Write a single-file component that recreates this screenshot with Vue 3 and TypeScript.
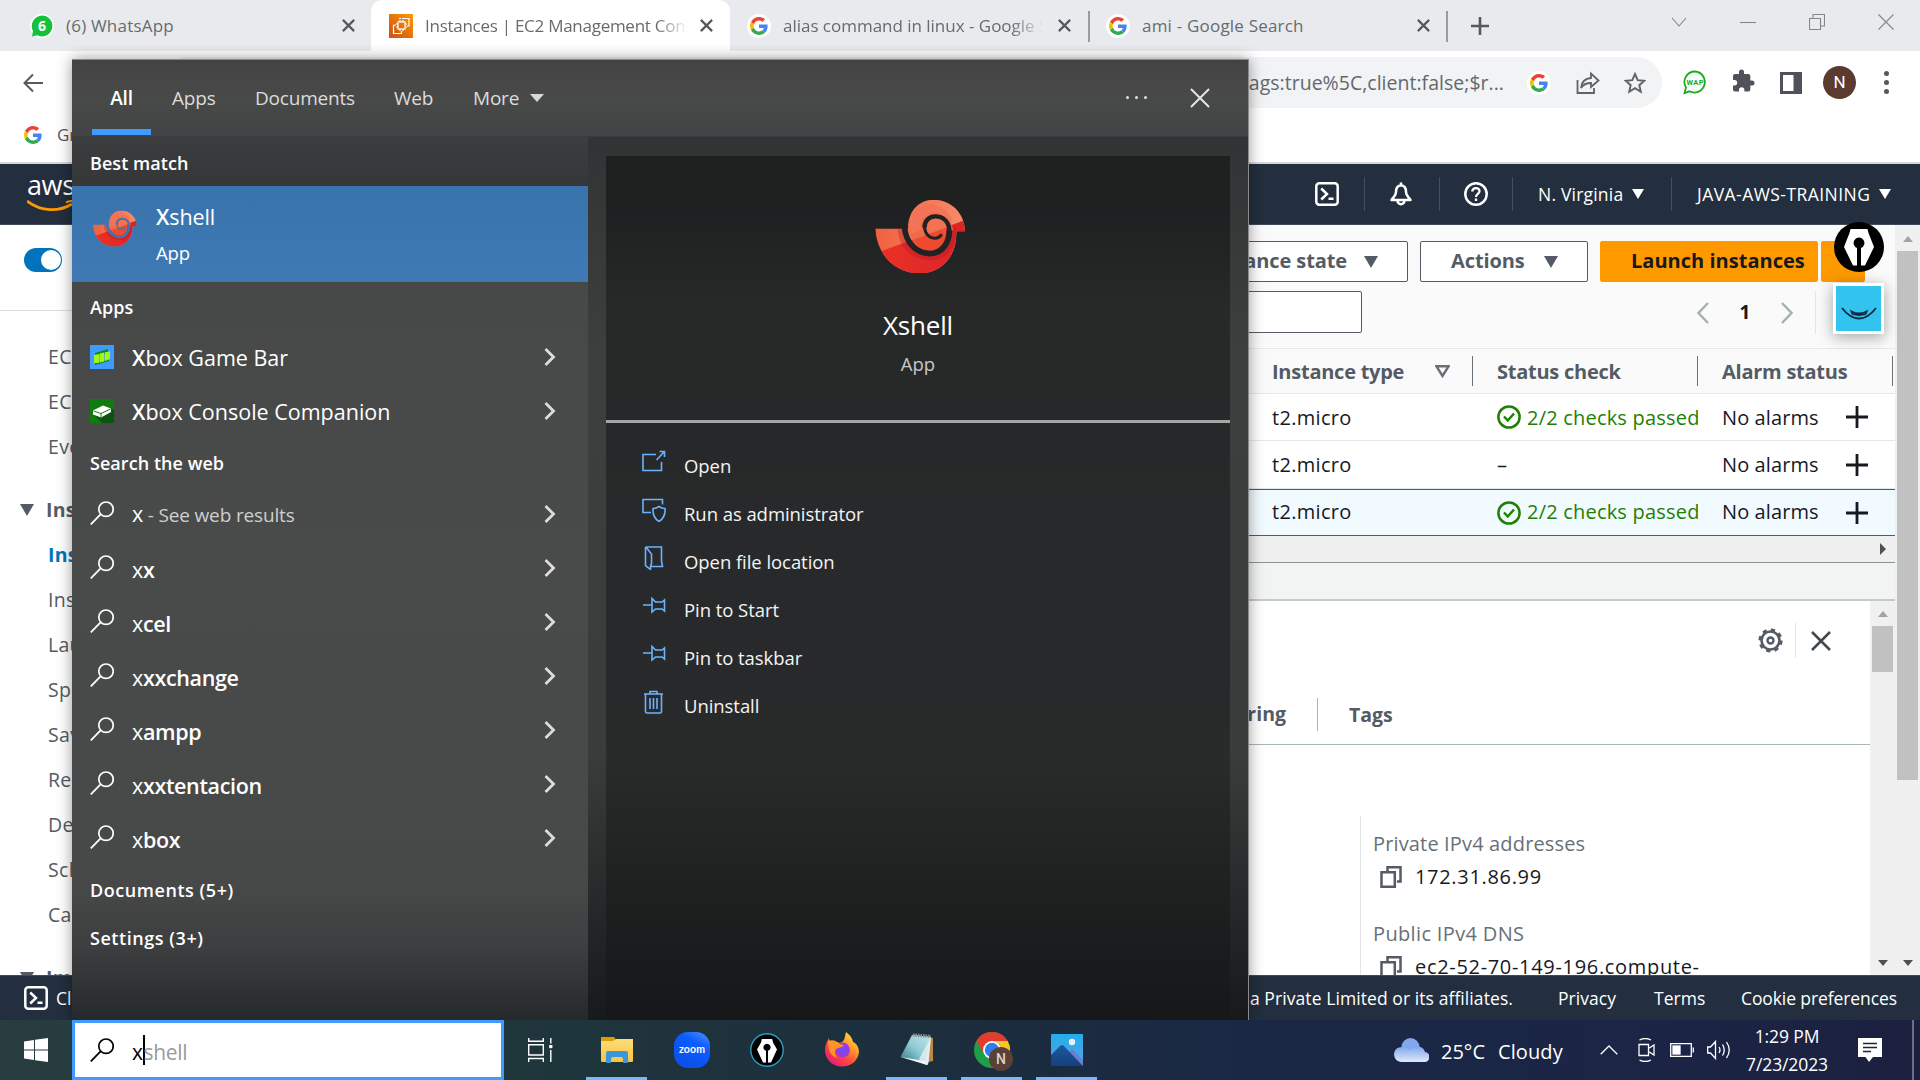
<script setup lang="ts">
interface NavItem { label: string; kind?: 'group' | 'active' }
interface Row { check: boolean; selected?: boolean }
interface WebHit { head: string; tail?: string; note?: string }

const navItems: NavItem[] = [
  { label: 'EC2' },
  { label: 'EC2' },
  { label: 'Eve' },
  { label: 'Insta', kind: 'group' },
  { label: 'Insta', kind: 'active' },
  { label: 'Insta' },
  { label: 'Lau' },
  { label: 'Spo' },
  { label: 'Sav' },
  { label: 'Res' },
  { label: 'Ded' },
  { label: 'Sch' },
  { label: 'Cap' },
  { label: 'Ima', kind: 'group' },
]
const rows: Row[] = [{ check: true }, { check: false }, { check: true, selected: true }]
const apps = [
  { icon: 'gamebar', rest: 'box Game Bar' },
  { icon: 'console', rest: 'box Console Companion' },
]
const webHits: WebHit[] = [
  { head: 'x', note: ' - See web results' },
  { head: 'x', tail: 'x' },
  { head: 'x', tail: 'cel' },
  { head: 'x', tail: 'xxchange' },
  { head: 'x', tail: 'ampp' },
  { head: 'x', tail: 'xxtentacion' },
  { head: 'x', tail: 'box' },
]
const actions = [
  { icon: 'open', label: 'Open' },
  { icon: 'admin', label: 'Run as administrator' },
  { icon: 'folder', label: 'Open file location' },
  { icon: 'pin', label: 'Pin to Start' },
  { icon: 'pin', label: 'Pin to taskbar' },
  { icon: 'trash', label: 'Uninstall' },
]
const taskApps = [
  { icon: 'explorer', open: true },
  { icon: 'zoom', open: false },
  { icon: 'pen-ring', open: false },
  { icon: 'firefox', open: false },
  { icon: 'notepad', open: true },
  { icon: 'chrome', open: true },
  { icon: 'photos', open: true },
]
</script>

<template>
  <div class="screen">
    <svg class="defs" width="0" height="0" aria-hidden="true">
      <defs>
        <linearGradient id="gUp" x1="0" x2="1"><stop offset="0" stop-color="#f0603f" /><stop offset="1" stop-color="#f78d6b" /></linearGradient>
        <linearGradient id="gLow" x1="0" x2="1"><stop offset="0" stop-color="#ee3127" /><stop offset="1" stop-color="#d92427" /></linearGradient>
        <linearGradient id="gEc2" x1="0" y1="1" x2="1" y2="0"><stop offset="0" stop-color="#c8511b" /><stop offset="1" stop-color="#ff9900" /></linearGradient>
        <linearGradient id="gZoom" x1="1" y1="0" x2="0.4" y2="1"><stop offset="0" stop-color="#4f92ff" /><stop offset="0.4" stop-color="#0b5cff" /><stop offset="1" stop-color="#0b50e8" /></linearGradient>
        <linearGradient id="gFox" x1="1" y1="0" x2="0.2" y2="1"><stop offset="0" stop-color="#fff44f" /><stop offset="0.35" stop-color="#ffa52a" /><stop offset="0.65" stop-color="#ff4a3d" /><stop offset="1" stop-color="#e5157c" /></linearGradient>
        <radialGradient id="gOrb"><stop offset="0" stop-color="#6a4ff5" /><stop offset="1" stop-color="#a435d8" /></radialGradient>
        <linearGradient id="gPhoto" x1="0" y1="0" x2="0" y2="1"><stop offset="0" stop-color="#24aeea" /><stop offset="1" stop-color="#5a9ee8" /></linearGradient>
        <linearGradient id="gHill" x1="0" y1="0" x2="0" y2="1"><stop offset="0" stop-color="#1b5a9c" /><stop offset="1" stop-color="#153f80" /></linearGradient>
        <linearGradient id="gCloud" x1="0" y1="0" x2="0" y2="1"><stop offset="0" stop-color="#7fa6ee" /><stop offset="1" stop-color="#dfe9fb" /></linearGradient>
        <linearGradient id="gNote" x1="0" y1="1" x2="1" y2="0"><stop offset="0" stop-color="#2d7484" /><stop offset="0.5" stop-color="#8fcbd6" /><stop offset="1" stop-color="#c4e4ea" /></linearGradient>
        <linearGradient id="gFolder" x1="0" y1="0" x2="0" y2="1"><stop offset="0" stop-color="#ffdd7c" /><stop offset="1" stop-color="#f8c33e" /></linearGradient>
        <clipPath id="shellClip"><path d="M45 145H143C141 95 175 58 218 58C270 58 311 95 313 152H287C290 225 245 278 178 278C100 278 50 220 45 145Z" /></clipPath>
      </defs>
      <symbol id="google" viewBox="0 0 48 48">
        <path fill="#EA4335" d="M24 9.5c3.54 0 6.71 1.22 9.21 3.6l6.85-6.85C35.9 2.38 30.47 0 24 0 14.62 0 6.51 5.38 2.56 13.22l7.98 6.19C12.43 13.72 17.74 9.5 24 9.5z" />
        <path fill="#4285F4" d="M46.98 24.55c0-1.57-.15-3.09-.38-4.55H24v9.02h12.94c-.58 2.96-2.26 5.48-4.78 7.18l7.73 6c4.51-4.18 7.09-10.36 7.09-17.65z" />
        <path fill="#FBBC05" d="M10.53 28.59c-.48-1.45-.76-2.99-.76-4.59s.27-3.14.76-4.59l-7.98-6.19C.92 16.46 0 20.12 0 24c0 3.88.92 7.54 2.56 10.78l7.97-6.19z" />
        <path fill="#34A853" d="M24 48c6.48 0 11.93-2.13 15.89-5.81l-7.73-6c-2.15 1.45-4.92 2.3-8.16 2.3-6.26 0-11.57-4.22-13.47-9.91l-7.98 6.19C6.51 42.62 14.62 48 24 48z" />
      </symbol>
      <symbol id="x" viewBox="0 0 12 12"><path d="M.8 .8L11.2 11.2M11.2 .8L.8 11.2" fill="none" stroke="currentColor" /></symbol>
      <symbol id="xshell" viewBox="45 56 270 224">
        <g clip-path="url(#shellClip)">
          <rect x="40" y="50" width="280" height="235" fill="url(#gUp)" />
          <path d="M40 220L150 180L320 116V290H40Z" fill="url(#gLow)" />
          <path d="M118 140C120 205 165 232 212 232C262 230 282 190 280 140" fill="none" stroke="#b01825" stroke-opacity=".35" stroke-width="14" />
          <path d="M150 150C150 190 180 212 212 210C240 208 256 180 256 150C254 120 236 98 222 98C200 100 180 120 182 145C184 165 200 182 222 180C240 178 250 160 246 140L280 150L256 90L215 70L160 90Z" fill="#f06844" fill-opacity=".75" />
          <path d="M150 96C172 62 252 58 275 118L252 140C250 108 236 96 222 97C192 98 176 120 181 148L152 160Z" fill="#f4765a" fill-opacity=".8" />
          <path d="M162 178L246 147C258 165 246 206 212 211C190 211 170 200 162 178Z" fill="#ee4a30" />
          <path d="M200 135C202 118 215 112 226 112C246 112 254 128 256 140L205 159Z" fill="#f27252" />
        </g>
        <path d="M132 138C136 192 172 219 209 219C246 219 267 184 266 150" fill="none" stroke="currentColor" stroke-width="17" />
        <path d="M266 151C266 122 246 108 225 108C203 108 192 124 192 141" fill="none" stroke="currentColor" stroke-width="13" />
        <path d="M192 139C193 160 206 173 221 173C233 173 240 168 243 161" fill="none" stroke="currentColor" stroke-width="9" />
      </symbol>
      <symbol id="loupe" viewBox="0 0 24 24"><circle cx="16" cy="8.2" r="7.2" fill="none" stroke="currentColor" stroke-width="1.7" /><path d="M10.8 13.2L.8 23.4" stroke="currentColor" stroke-width="1.8" /></symbol>
      <symbol id="shellbox" viewBox="0 0 24 24"><rect x="1.3" y="1.3" width="21.4" height="21.4" rx="3" fill="none" stroke="currentColor" stroke-width="2.5" /><path d="M6.2 6.5L12 12L6.2 17.5M13.5 16.8H18.5" fill="none" stroke="currentColor" stroke-width="2.5" /></symbol>
      <symbol id="nib" viewBox="0 0 50 50"><circle cx="25" cy="25" r="25" fill="#000" /><path d="M16.5 7H33.5L34.5 11L40 25L31 43.5H27V26A5.4 5.4 0 1 0 23 26V43.5H19L10 25L15.500 11Z" fill="#fff" /><path d="M25 26V44" stroke="#000" stroke-width="2.4" /></symbol>
      <symbol id="gamebar" viewBox="0 0 24 24"><rect width="24" height="24" fill="#3f9bff" /><path d="M5 8L18 4V8L5 12ZM5 17L19 14V16L5 20Z" fill="#0f8a1c" /><path d="M4 10L9 9V18L4 18ZM9.500 8.500L14 7.500V16.500L9.500 17.500ZM14.700 7.300L20 6.500V14L14.700 16.200Z" fill="#a4f51c" /></symbol>
      <symbol id="console" viewBox="0 0 24 24"><rect width="24" height="24" fill="#107c10" /><path d="M3 15L12 24H24V11L20 9Z" fill="#0a540d" /><path d="M3 11.500L13 6.500L21 9.500V13L11 18.500L3 15.500Z" fill="#fff" /><path d="M3.500 12L11 14.500L20.500 10M11 14.500V18" fill="none" stroke="#107c10" /></symbol>
      <symbol id="open" viewBox="0 0 24 24"><path d="M14 4.500H1V20.500H19.500V12M14.500 10L22 2M17.500 1.500H22.500V7" fill="none" stroke="currentColor" stroke-width="1.600" /></symbol>
      <symbol id="admin" viewBox="0 0 24 24"><path d="M9 14.500H1V1.500H20.500V6.500M17 8.500C15 10 13 10.500 11 10.500C10.500 17 12 20.500 17 23.500C22 20.500 23.500 17 23 10.500C21 10.500 19 10 17 8.500Z" fill="none" stroke="currentColor" stroke-width="1.600" /></symbol>
      <symbol id="folder" viewBox="0 0 24 24"><path d="M3.500 1H19.500V15L20.500 20.500H9M3.500 1V19.500L8.500 23.500V20.500L9.500 17.500V8L4 1.200" fill="none" stroke="currentColor" stroke-width="1.600" /></symbol>
      <symbol id="pin" viewBox="0 0 24 24"><path d="M1 11H10M10 4.500V18L13.500 15H20L22.500 17V6L20 8H13.500Z" fill="none" stroke="currentColor" stroke-width="1.600" /></symbol>
      <symbol id="trash" viewBox="0 0 24 24"><path d="M2 4H21M8 4V1.500H15V4M3.500 4V21.500Q3.500 23 5 23H18Q19.500 23 19.500 21.500V4M8 8V19M11.500 8V19M15 8V19" fill="none" stroke="currentColor" stroke-width="1.600" /></symbol>
      <symbol id="copy" viewBox="0 0 22 22"><path d="M7.500 5V1.300H20.500V15.500H17M1.500 6.300H14.800V20.700H1.500Z" fill="none" stroke="currentColor" stroke-width="2.500" /></symbol>
      <symbol id="check" viewBox="0 0 24 24"><circle cx="12" cy="12" r="10.600" fill="none" stroke="currentColor" stroke-width="2.500" /><path d="M7 11.500L10.800 15.500L17 8.500" fill="none" stroke="currentColor" stroke-width="2.500" /></symbol>
      <symbol id="explorer" viewBox="0 0 44 44"><path d="M6 9H19L20.500 11V14H6Z" fill="#dd9b07" /><path d="M6 13H18L21 11H38V33Q38 34 37 34H7Q6 34 6 33Z" fill="url(#gFolder)" /><path d="M11 34V25Q11 23 13 23H31Q33 23 33 25V34Q33 35 32 35H28.500Q28 35 28 34V31Q28 29 26 29H18Q16 29 16 31V34Q16 35 15 35H12Q11 35 11 34Z" fill="#3b96dd" /></symbol>
      <symbol id="zoom" viewBox="0 0 44 44"><rect x="4" y="4" width="36" height="36" rx="14" fill="url(#gZoom)" /></symbol>
      <symbol id="pen-ring" viewBox="0 0 44 44"><circle cx="22" cy="22" r="16.200" fill="#000" stroke="#2a9fc4" stroke-width="1.400" /><path d="M16.800 11H27.200L28 14.500L32 21.500L26 34.500H23V22.800A3.600 3.600 0 1 0 21 22.800V34.500H18L12 21.500L16 14.500Z" fill="#fff" /><path d="M22 22V35" stroke="#000" stroke-width="1.200" /></symbol>
      <symbol id="firefox" viewBox="0 0 44 44"><path d="M26 4C31 8 32 10 33 14C36 15 39 19 39 24C38 33 31 38.500 22 38.500C12 38.500 5 31 5 22C5 17 7 13 9 10C9 12 10 14 11 14L17 14C19 15 22 15 23 13C25 11 25 7 26 4Z" fill="url(#gFox)" /><circle cx="22.500" cy="22" r="7.400" fill="url(#gOrb)" /><path d="M8 13C14 11 17 14 20 16L24 17.500C21 20 19 19 16 21C14 24 15 28 18 30C12 29 8 24 8 13Z" fill="#ff9328" /></symbol>
      <symbol id="notepad" viewBox="0 0 44 44"><path d="M32 8L38 10V33L33 34Z" fill="#b98a45" /><path d="M18 7L36 9L33 37L27 35Z" fill="#d9dee0" /><path d="M17 7L36 9L30 35L5.500 29Z" fill="url(#gNote)" /><path d="M36 9L24 31L31 37L33.500 35Z" fill="#eef1f2" fill-opacity=".75" /><path d="M5.500 29L32 37L30 33Z" fill="#f3f6f7" /><path d="M18 7L36 8.500" stroke="#8b9296" stroke-width="3.500" stroke-dasharray="1.500 1" /></symbol>
      <symbol id="chrome" viewBox="0 0 44 44"><circle cx="22" cy="22" r="18" fill="#1e9e49" /><path d="M6.400 13A18 18 0 0 1 37.600 13H22A9 9 0 0 0 14.200 26.500Z" fill="#e33b2e" /><path d="M37.600 13A18 18 0 0 1 22 40L29.800 26.500A9 9 0 0 0 22 13Z" fill="#fcc31e" /><circle cx="22" cy="22" r="9" fill="#fff" /><circle cx="22" cy="22" r="7.200" fill="#2f7de9" /><circle cx="31" cy="31" r="12" fill="#5b4037" /></symbol>
      <symbol id="photos" viewBox="0 0 44 44"><rect x="6" y="6" width="32" height="32" rx="1" fill="url(#gPhoto)" /><path d="M22 26L27 21L38 32V38H22Z" fill="#6b7fd0" /><path d="M6 27L15.500 17.500Q17 16.500 18.500 17.500L38 38H6Z" fill="url(#gHill)" /><circle cx="27" cy="14" r="3.200" fill="#e8f4fd" /></symbol>
    </svg>

    <!-- browser tab strip -->
    <div class="tabstrip">
      <div class="tab t1">
        <svg class="fav" width="24" height="24" viewBox="0 0 24 24"><circle cx="12" cy="12" r="12" fill="#fff" /><path d="M12 1.500A10.500 10.500 0 1 1 7 21.300L2 22.500L3 17A10.500 10.500 0 0 1 12 1.500Z" fill="#13c13c" /><text x="12" y="17" text-anchor="middle" fill="#fff" font-family="Open Sans, sans-serif" font-weight="700" font-size="14">6</text></svg>
        <span class="title">(6) WhatsApp</span>
        <svg class="tx" width="13" height="13"><use href="#x" /></svg>
      </div>
      <div class="tab t2 on">
        <svg class="fav" width="24" height="24" viewBox="0 0 24 24"><rect width="24" height="24" fill="url(#gEc2)" /><g fill="none" stroke="#fff" stroke-width="1.200"><rect x="9" y="8" width="7" height="7" /><path d="M13 4.500H20V12H18M10 4.500H12M4.500 11H7M4.500 11V19.500H12.500V17M11 6V8M14 6V8M11 15V17M14 15V17M7 10H9M7 13H9M16 10H18M16 13H18" /></g></svg>
        <span class="title fade">Instances | EC2 Management Console</span>
        <svg class="tx" width="13" height="13"><use href="#x" /></svg>
      </div>
      <div class="tab t3">
        <span class="gdisc"><svg width="18" height="18"><use href="#google" /></svg></span>
        <span class="title fade">alias command in linux - Google Search</span>
        <svg class="tx" width="13" height="13"><use href="#x" /></svg>
      </div>
      <div class="tab t4">
        <span class="gdisc"><svg width="18" height="18"><use href="#google" /></svg></span>
        <span class="title">ami - Google Search</span>
        <svg class="tx" width="13" height="13"><use href="#x" /></svg>
      </div>
      <svg class="plus" width="18" height="18" viewBox="0 0 18 18"><path d="M9 0V18M0 9H18" stroke="#55595e" stroke-width="2.600" /></svg>
      <div class="winbtns">
        <svg width="16" height="16" viewBox="0 0 16 16"><path d="M1 4L8 12L15 4" /></svg>
        <svg width="16" height="16" viewBox="0 0 16 16"><path d="M0 8.500H16" /></svg>
        <svg width="16" height="16" viewBox="0 0 16 16"><path d="M.5 4.500H11.500V15.500H.5ZM4 4.500V.5H15.500V12H11.500" /></svg>
        <svg width="16" height="16" viewBox="0 0 16 16"><path d="M.5 .5L15.500 15.500M15.500 .5L.5 15.500" /></svg>
      </div>
    </div>

    <!-- address bar -->
    <div class="toolbar">
      <svg class="back" width="20" height="20" viewBox="0 0 20 20"><path d="M20 10H2M10 1.500L1.500 10L10 18.500" fill="none" stroke="#55595e" stroke-width="2" /></svg>
      <div class="omni">
        <span class="url">tags:true%5C,client:false;$r...</span>
        <span class="gdisc"><svg width="18" height="18"><use href="#google" /></svg></span>
        <svg class="o2" width="24" height="24" viewBox="0 0 24 24"><path d="M1.500 9V22H18V17M5 17C5.500 10.500 9 7.500 15 7V2.500L22.500 9.500L15 16V12C10.500 12 7.500 13 5 17Z" fill="none" stroke="#5f6368" stroke-width="1.800" /></svg>
        <svg class="o3" width="22" height="22" viewBox="0 0 22 22"><path d="M11 2L13.700 8.200L20.300 8.800L15.300 13.200L16.800 19.700L11 16.200L5.200 19.700L6.700 13.200L1.700 8.800L8.300 8.200Z" fill="none" stroke="#5f6368" stroke-width="1.900" /></svg>
      </div>
      <svg class="wap" width="24" height="25" viewBox="0 0 24 25"><path d="M12 1.500A10.500 10.500 0 1 1 6.500 21.300L1.500 23L3 17.500A10.500 10.500 0 0 1 12 1.500Z" fill="none" stroke="#1aab1a" stroke-width="1.800" /><text x="12" y="14.800" text-anchor="middle" fill="#1aab1a" font-family="Roboto, sans-serif" font-weight="700" font-size="7.500" textLength="17">WAP</text></svg>
      <svg class="puz" width="24" height="24" viewBox="0 0 24 24"><path d="M21 11.500H19.300V7A2 2 0 0 0 17.300 5H13V3A2.500 2.500 0 0 0 8 3V5H4A2 2 0 0 0 2 7V11H3.500A2.700 2.700 0 0 1 3.500 16.400H2V20.500A2 2 0 0 0 4 22.500H8V21A2.700 2.700 0 0 1 13.400 21V22.500H17.300A2 2 0 0 0 19.300 20.500V16.500H21A2.500 2.500 0 0 0 21 11.500Z" fill="#4f5359" /></svg>
      <svg class="side" width="22" height="22" viewBox="0 0 22 22"><path d="M0 0H22V22H0ZM3 3V19H13.500V3Z" fill="#4f5359" fill-rule="evenodd" /></svg>
      <span class="avatar">N</span>
      <span class="dots"><i /><i /><i /></span>
    </div>
    <div class="bookmarks">
      <svg width="18" height="18"><use href="#google" /></svg>
      <span>Gm</span>
    </div>

    <!-- AWS navigation -->
    <header class="aws">
      <div class="logo"><span>aws</span><svg width="56" height="14" viewBox="0 0 56 14"><path d="M0 1C14 12 32 12 45 4" fill="none" stroke="#f90" stroke-width="2.800" /><path d="M39 2.500Q45 0 48 2" fill="none" stroke="#f90" stroke-width="2" /></svg></div>
      <div class="cell c1"><svg width="24" height="24"><use href="#shellbox" /></svg></div>
      <div class="cell c2"><svg width="24" height="24" viewBox="0 0 24 24"><path d="M12 .5V4M12 3.500C7.500 3.500 7 8 7 10C7 14 4.500 15 2.500 18H21.500C19.500 15 17 14 17 10C17 8 16.500 3.500 12 3.500ZM8.500 18.500A3.500 3.700 0 0 0 15.500 18.500" fill="none" stroke="#fff" stroke-width="2.500" stroke-linejoin="round" /></svg></div>
      <div class="cell c3"><svg width="24" height="24" viewBox="0 0 24 24"><circle cx="12" cy="12" r="10.700" fill="none" stroke="#fff" stroke-width="2.500" /><path d="M8.300 9.500C8.500 4.800 15.700 5 15.500 9.300C15.400 12 12 12 12 15M12 16.500V19" fill="none" stroke="#fff" stroke-width="2.300" /></svg></div>
      <div class="cell c4"><span>N. Virginia</span><i class="tri w" /></div>
      <div class="cell c5"><span>JAVA-AWS-TRAINING</span><i class="tri w" /></div>
    </header>

    <main class="console">
      <nav class="side-nav">
        <div class="switchrow"><span class="switch"><i /></span></div>
        <ul>
          <li v-for="(n, i) in navItems" :key="i" :class="n.kind"><i v-if="n.kind === 'group'" class="tri g" />{{ n.label }}</li>
        </ul>
      </nav>

      <section class="main">
        <div class="list">
          <div class="btnrow">
            <div class="btn b1"><span>Instance state</span><i class="tri b" /></div>
            <div class="btn b2"><span>Actions</span><i class="tri b" /></div>
            <div class="btn launch"><span>Launch instances</span></div>
            <div class="btn split" />
          </div>
          <div class="filterrow">
            <div class="find" />
            <div class="pager">
              <svg width="12" height="22" viewBox="0 0 12 22"><path d="M11 1L1.500 11L11 21" /></svg>
              <b>1</b>
              <svg width="12" height="22" viewBox="0 0 12 22"><path d="M1 1L10.500 11L1 21" /></svg>
            </div>
          </div>
          <div class="thead">
            <div class="h1"><span>Instance type</span><svg width="15" height="13" viewBox="0 0 15 13"><path d="M1.500 1.300H13.500L7.500 11Z" fill="none" stroke="#687078" stroke-width="2.400" /></svg></div>
            <div class="h2"><span>Status check</span></div>
            <div class="h3"><span>Alarm status</span></div>
          </div>
          <div v-for="(r, i) in rows" :key="i" class="row" :class="{ sel: r.selected }">
            <div class="d1">t2.micro</div>
            <div class="d2" :class="{ ok: r.check }"><template v-if="r.check"><svg width="24" height="24"><use href="#check" /></svg><span>2/2 checks passed</span></template><template v-else>–</template></div>
            <div class="d3"><span>No alarms</span><svg width="22" height="22" viewBox="0 0 22 22"><path d="M11 0V22M0 11H22" stroke="#16191f" stroke-width="2.800" /></svg></div>
          </div>
          <div class="hscroll"><i /></div>
        </div>
        <div class="detail">
          <div class="dbody">
            <div class="dtools">
              <svg width="25" height="25" viewBox="0 0 25 25"><circle cx="12.500" cy="12.500" r="9" fill="none" stroke="#545b64" stroke-width="2.600" /><circle cx="12.500" cy="12.500" r="10.900" fill="none" stroke="#545b64" stroke-width="2.400" stroke-dasharray="4.280 4.280" /><circle cx="12.500" cy="12.500" r="3" fill="none" stroke="#545b64" stroke-width="2.400" /></svg>
              <div class="dx"><svg width="20" height="20" viewBox="0 0 20 20"><path d="M1 1L19 19M19 1L1 19" stroke="#414750" stroke-width="2.500" /></svg></div>
            </div>
            <div class="dtabs"><span class="mon">Monitoring</span><span class="tags">Tags</span></div>
            <div class="info">
              <div class="k">Private IPv4 addresses</div>
              <div class="v"><svg width="22" height="22"><use href="#copy" /></svg><span>172.31.86.99</span></div>
              <div class="k second">Public IPv4 DNS</div>
              <div class="v"><svg width="22" height="22"><use href="#copy" /></svg><span>ec2-52-70-149-196.compute-</span></div>
            </div>
          </div>
          <div class="bar inner"><i class="up" /><i class="thumb" /><i class="down" /></div>
        </div>
      </section>
      <div class="bar outer"><i class="up" /><i class="thumb" /><i class="down" /></div>
    </main>

    <footer class="foot">
      <svg width="24" height="24"><use href="#shellbox" /></svg>
      <span class="cs">Clo</span>
      <span class="legal">ia Private Limited or its affiliates.</span>
      <span class="f1">Privacy</span><span class="f2">Terms</span><span class="f3">Cookie preferences</span>
    </footer>

    <!-- taskbar -->
    <div class="taskbar">
      <div class="start"><svg width="24" height="24" viewBox="0 0 24 24"><path d="M0 3.500L10 2V11.500H0ZM11 1.800L24 0V11.500H11ZM0 12.500H10V22L0 20.500ZM11 12.500H24V24L11 22.200Z" fill="#fff" /></svg></div>
      <div class="search"><svg width="24" height="24"><use href="#loupe" /></svg><span class="typed">x</span><i class="caret" /><span class="hint">shell</span></div>
      <svg class="tview" width="25" height="24" viewBox="0 0 25 24"><path d="M.7 0V3.300H15.300V0M.7 6.700H15.300V17H.7ZM.7 24V20.500H15.300V24M22.800 0V5.500M22.800 12V24" fill="none" stroke="#fff" stroke-width="1.400" /><rect x="21.200" y="7" width="3.200" height="3.200" fill="#fff" /></svg>
      <div class="pinned">
        <div v-for="a in taskApps" :key="a.icon" class="slot" :class="{ open: a.open }">
          <svg width="44" height="44" viewBox="0 0 44 44">
            <use :href="'#' + a.icon" />
            <text v-if="a.icon === 'zoom'" x="22" y="25" text-anchor="middle" fill="#fff" font-family="Lato, sans-serif" font-weight="700" font-size="10.500" textLength="26">zoom</text>
            <text v-if="a.icon === 'chrome'" x="31" y="36" text-anchor="middle" fill="#d9d0cc" font-family="Roboto, sans-serif" font-weight="500" font-size="14">N</text>
          </svg>
        </div>
      </div>
      <div class="tray">
        <svg class="cloud" width="36" height="24" viewBox="0 0 36 24"><circle cx="17.500" cy="9" r="9" fill="#82a7ec" /><path d="M8 24A7.500 7.500 0 0 1 6 9.500C11 8 15 10 17 12C21 7 30 7 32 14A5 5 0 0 1 31 24Z" fill="url(#gCloud)" /></svg>
        <span class="temp">25°C</span><span class="sky">Cloudy</span>
        <svg class="chev" width="18" height="10" viewBox="0 0 18 10"><path d="M.7 9.300L9 1L17.300 9.300" /></svg>
        <svg class="cam" width="17" height="24" viewBox="0 0 17 24"><path d="M1.500 2Q7 -1 13 2M1.500 22Q7 25 13 22M1 6.500H10.500V17.500H1ZM10.500 10.500L16 7V17L10.500 13.500" /></svg>
        <svg class="bat" width="24" height="14" viewBox="0 0 24 14"><path d="M.7 .7H21.300V13.300H.7ZM23.300 4.500V9.500" /><rect x="3" y="3" width="7" height="8" fill="#fff" /></svg>
        <svg class="vol" width="24" height="20" viewBox="0 0 24 20"><path d="M.7 7H3.500L8.500 1.500V18.500L3.500 13H.7ZM12 7Q14 10 12 13M15.500 4.500Q19 10 15.500 15.500M19.500 2Q25 10 19.500 18" /></svg>
        <div class="clock"><span>1:29 PM</span><span class="date">7/23/2023</span></div>
        <svg class="note" width="24" height="24" viewBox="0 0 24 24"><path d="M0 0H24V19H15L11 24L7.500 19H0Z" fill="#fff" /><path d="M5 5.500H19M5 9.500H19M5 13.500H13" stroke="#1a2340" stroke-width="1.500" /></svg>
        <i class="desk" />
      </div>
    </div>

    <!-- extension widgets floating over the page -->
    <svg class="float-nib" width="50" height="50"><use href="#nib" /></svg>
    <div class="float-smile"><svg width="36" height="14" viewBox="0 0 36 14"><path d="M1 1Q9 11.500 18 11.500T35 1M10.500 4.500Q18 8.500 25.500 4.500L24.500 7Q18 9 11.500 7Z" fill="none" stroke="#0b2b44" stroke-width="1.800" /></svg></div>

    <!-- start search flyout -->
    <div class="flyout">
      <div class="scopes">
        <span class="s1">All</span><span class="s2">Apps</span><span class="s3">Documents</span><span class="s4">Web</span><span class="s5">More</span><i class="tri m" />
        <span class="ell"><i /><i /><i /></span>
        <svg class="sx" width="20" height="20" viewBox="0 0 20 20"><path d="M1 1L19 19M19 1L1 19" stroke="#e8e8e8" stroke-width="1.900" /></svg>
      </div>
      <div class="cols">
        <div class="results">
          <h3 class="first">Best match</h3>
          <div class="best">
            <svg width="44" height="37"><use href="#xshell" /></svg>
            <div><p class="n"><b>X</b>shell</p><p class="k">App</p></div>
          </div>
          <h3>Apps</h3>
          <div v-for="a in apps" :key="a.icon" class="hit">
            <svg width="24" height="24"><use :href="'#' + a.icon" /></svg>
            <span class="app"><b>X</b>{{ a.rest }}</span>
            <svg class="go" width="12" height="18" viewBox="0 0 12 18"><path d="M1.500 1L9.500 9L1.500 17" /></svg>
          </div>
          <h3 class="web">Search the web</h3>
          <div v-for="(w, i) in webHits" :key="i" class="hit q" :class="{ noted: w.note }">
            <svg width="24" height="24"><use href="#loupe" /></svg>
            <span>{{ w.head }}<b v-if="w.tail">{{ w.tail }}</b><small v-if="w.note">{{ w.note }}</small></span>
            <svg class="go" width="12" height="18" viewBox="0 0 12 18"><path d="M1.500 1L9.500 9L1.500 17" /></svg>
          </div>
          <h3 class="count">Documents (5+)</h3>
          <h3 class="count">Settings (3+)</h3>
        </div>
        <div class="preview">
          <div class="card">
            <div class="hero">
              <svg width="91" height="75"><use href="#xshell" /></svg>
              <p class="n">Xshell</p>
              <p class="k">App</p>
            </div>
            <div v-for="a in actions" :key="a.label" class="act"><svg width="24" height="24"><use :href="'#' + a.icon" /></svg><span>{{ a.label }}</span></div>
          </div>
        </div>
      </div>
    </div>
  </div>
</template>

<style>
html, body { margin: 0; background: #fff; }
</style>

<style scoped>
* { box-sizing: border-box; }
.screen { position: relative; width: 1920px; height: 1080px; overflow: hidden; display: flex; flex-direction: column; font-family: "Open Sans", "Noto Sans", sans-serif; color: #16191f; white-space: nowrap; background: #fff; }
.defs { position: absolute; }
svg { flex: none; display: block; }
p, h3, ul { margin: 0; padding: 0; list-style: none; }
i { flex: none; display: block; }

.tri { width: 0; height: 0; border-left: 7px solid transparent; border-right: 7px solid transparent; border-top: 11px solid; }
.tri.w { border-left-width: 6px; border-right-width: 6px; border-top-width: 10px; color: #fff; }
.tri.b { border-left-width: 7.500px; border-right-width: 7.500px; border-top-width: 12px; color: #545b64; }
.tri.m { border-top-width: 8px; color: #d8d8d8; margin-left: 10px; }

/* tabs */
.tabstrip { flex: none; height: 51px; background: #e8eaed; display: flex; align-items: center; }
.tab { position: relative; height: 51px; display: flex; align-items: center; color: #676b70; font-size: 17px; }
.t1 { width: 371px; padding: 0 16px 0 30px; letter-spacing: .2px; }
.t2 { width: 359px; padding: 0 17px 0 18px; background: #fff; border-radius: 11px 11px 0 0; letter-spacing: -.27px; }
.t3 { width: 360px; padding: 0 17px 0 17px; border-right: 2px solid; border-image: linear-gradient(transparent 12px, #989b9f 12px, #989b9f 41px, transparent 41px) 1; letter-spacing: -.02px; }
.t4 { width: 358px; padding: 0 16px 0 16px; border-right: 2px solid; border-image: linear-gradient(transparent 12px, #989b9f 12px, #989b9f 41px, transparent 41px) 1; letter-spacing: .2px; }
.title { flex: 1; margin-left: 12px; overflow: hidden; }
.t2 .title { margin-right: 10px; }
.t3 .title, .t4 .title { margin-right: 13px; }
.fade { mask-image: linear-gradient(90deg, #000 calc(100% - 34px), transparent calc(100% - 2px)); }
.tx { color: #55595e; stroke-width: 2px; }
.gdisc { flex: none; width: 24px; height: 24px; border-radius: 50%; background: #fff; display: flex; align-items: center; justify-content: center; }
.plus { margin-left: 23px; }
.winbtns { display: flex; gap: 53px; margin-left: auto; margin-right: 26px; padding-bottom: 8px; fill: none; stroke: #83868b; stroke-width: 1.100px; }

.toolbar { flex: none; height: 63px; display: flex; align-items: center; padding-left: 23px; }
.omni { margin-left: 120px; width: 1499px; height: 51px; border-radius: 26px; background: #f1f3f4; display: flex; align-items: center; justify-content: flex-end; padding-right: 16px; }
.url { font-size: 19.500px; color: #64686d; letter-spacing: .02px; padding-bottom: 1px; }
.omni .gdisc { margin-left: 23px; }
.o2 { margin-left: 25px; }
.o3 { margin-left: 24px; }
.wap { margin-left: 21px; }
.puz { margin: -4px 0 0 24px; }
.side { margin-left: 25px; }
.avatar { margin-left: 21px; width: 33px; height: 33px; border-radius: 50%; background: #5b3a30; color: #fff; font: 17px/33px Roboto, sans-serif; text-align: center; }
.dots { margin-left: 28px; display: flex; flex-direction: column; gap: 4px; }
.dots i { width: 5px; height: 5px; border-radius: 50%; background: #55595e; }
.bookmarks { flex: none; height: 50px; border-bottom: 2px solid #d5d7da; display: flex; align-items: center; gap: 15px; padding: 0 0 7px 24px; font-size: 17px; color: #55595e; }

.aws { flex: none; height: 61px; background: #232f3e; border-bottom: 1px solid #414b57; display: flex; align-items: center; color: #fff; font-weight: 500; font-size: 17.500px; }
.logo { width: 80px; margin-left: 27px; margin-right: auto; }
.logo span { display: block; font-size: 27px; line-height: 30px; height: 30px; margin-top: -5px; letter-spacing: -.4px; }
.cell { height: 34px; display: flex; align-items: center; border-left: 1.500px solid #46505c; }
.cell span { padding-bottom: 1px; }
.c1 { width: 49px; border: 0; padding-left: 0; }
.c2 { width: 75px; padding-left: 24px; }
.c3 { width: 73px; padding-left: 24px; }
.c4 { width: 159px; padding-left: 25px; }
.c5 { width: 249px; padding-left: 25px; }
.c4 .tri, .c5 .tri { margin-left: 9px; }
.c4 span { letter-spacing: .2px; }
.c5 span { letter-spacing: .45px; }

.console { flex: none; height: 750px; display: flex; overflow: hidden; }
.side-nav { width: 300px; flex: none; background: #fff; }
.switchrow { height: 86px; border-bottom: 1px solid #d9e0e0; padding: 23px 0 0 24px; }
.switch { display: flex; justify-content: flex-end; width: 38px; height: 24px; border-radius: 12px; background: #0073bb; padding: 2px 1px; }
.switch i { width: 20px; height: 20px; border-radius: 50%; background: #fff; }
.side-nav ul { padding-top: 24px; }
.side-nav li { height: 45px; line-height: 44px; padding-left: 48px; font-size: 19.500px; letter-spacing: .3px; color: #545b64; }
.side-nav li.group { font-weight: 700; display: flex; align-items: center; padding-left: 20px; margin: 17px 0 1px; }
.tri.g { border-left-width: 7.500px; border-right-width: 7.500px; border-top-width: 12px; margin-right: 12px; }
.side-nav li.active { color: #0073bb; font-weight: 700; }

.main { flex: 1; display: flex; flex-direction: column; background: #f2f3f3; min-width: 0; }
.list { flex: none; height: 338px; background: #fafafa; border-bottom: 2px solid #879596; }
.btnrow { display: flex; justify-content: flex-end; gap: 12px; padding: 16px 30px 0 0; height: 66px; }
.btn { height: 41px; border: 1.500px solid #545b64; border-radius: 2px; background: #fff; display: flex; align-items: center; color: #545b64; font-weight: 700; font-size: 20px; }
.btn span { padding-bottom: 2px; }
.b1 { width: 240px; justify-content: flex-end; padding-right: 29px; }
.b1 .tri { margin-left: 17px; }
.b2 { width: 168px; padding-left: 30px; }
.b2 .tri { margin-left: 19px; }
.b1 span, .b2 span { letter-spacing: -.1px; }
.launch { width: 218px; background: #f90; border-color: #f90; color: #16191f; padding-left: 30px; letter-spacing: .02px; }
.split { width: 44px; background: #f90; border-color: #f90; margin-left: -9px; }
.filterrow { display: flex; height: 57px; }
.find { width: 1062px; height: 42px; border: 1.500px solid #545b64; border-radius: 2px; background: #fff; }
.pager { display: flex; align-items: center; height: 43px; margin-left: 335px; width: 119px; border-right: 1px solid #e3e6e6; font-size: 19px; }
.pager svg { fill: none; stroke: #a5b1b2; stroke-width: 2.500px; }
.pager b { width: 72px; text-align: center; padding-bottom: 1px; }
.thead { display: flex; align-items: center; height: 46px; border-top: 1px solid #e3e8e8; border-bottom: 1px solid #e3e8e8; font-weight: 700; font-size: 20px; color: #545b64; letter-spacing: -.25px; }
.thead > div { height: 30px; display: flex; align-items: center; border-right: 1.500px solid #687078; }
.h1 { width: 1173px; padding-left: 972px; justify-content: space-between; padding-right: 22px; }
.h2 { width: 225px; padding-left: 24px; }
.h3 { width: 195px; padding-left: 24px; }
.row { height: 48px; display: flex; align-items: center; background: #fff; border-bottom: 1px solid #e3e8e8; font-size: 20px; }
.row:nth-child(4) { height: 47px; }
.row.sel { height: 47px; background: #f1faff; border: 1.500px solid #0073bb; border-width: 1.500px 0; }
.row.sel .d1, .row.sel .d2 span, .row.sel .d3 span { padding-bottom: 2px; }
.d1 { width: 1173px; padding-left: 972px; letter-spacing: .3px; }
.d2 { width: 225px; padding-left: 24px; display: flex; align-items: center; overflow: hidden; }
.d2 span { margin-left: 6px; letter-spacing: .2px; }
.ok { color: #1d8102; }
.d3 { padding-left: 24px; display: flex; align-items: center; width: 170px; justify-content: space-between; letter-spacing: .1px; }
.hscroll { height: 26px; background: #f0f0f0; display: flex; align-items: center; justify-content: flex-end; padding-right: 9px; }
.hscroll i { border: 6px solid transparent; border-right: 0; border-left: 6px solid #505050; }
.detail { flex: 1; margin-top: 36px; border-top: 2px solid #c4c9c9; background: #fff; display: flex; min-height: 0; }
.dbody { flex: 1; overflow: hidden; }
.dtools { height: 35px; margin-top: 22px; display: flex; align-items: center; justify-content: flex-end; padding-right: 39px; }
.dx { margin-left: 12px; padding-left: 15px; height: 35px; border-left: 1px solid #e3e6e6; display: flex; align-items: center; }
.dtabs { display: flex; align-items: center; height: 87px; padding-top: 26px; border-bottom: 1.500px solid #aab7b8; font-weight: 700; font-size: 19.500px; color: #545b64; }
.mon { width: 1018px; height: 33px; line-height: 32px; text-align: right; padding-right: 31px; border-right: 1.500px solid #aab7b8; }
.tags { margin-left: 31px; }
.info { margin: 71px 0 0 1060px; border-left: 1px solid #e3e6e6; padding: 11px 0 0 12px; height: 200px; font-size: 20px; }
.info .k { color: #687078; height: 33px; line-height: 34px; letter-spacing: .15px; }
.info .v { display: flex; align-items: center; height: 33px; padding-left: 7px; color: #16191f; }
.info .v svg { color: #545b64; margin-right: 13px; }
.info .second { margin-top: 24px; letter-spacing: .35px; }
.info .v span { letter-spacing: .68px; padding-bottom: 1px; }
.bar { flex: none; background: #f0f0f0; display: flex; flex-direction: column; align-items: center; }
.bar .thumb { background: #c1c1c1; width: 21px; }
.bar .up { border: 5.500px solid transparent; border-top: 0; border-bottom: 6px solid #a3a3a3; }
.bar .down { border: 5.500px solid transparent; border-bottom: 0; border-top: 6px solid #505050; margin-top: auto; }
.bar.inner { width: 25px; padding: 10px 0 9px; }
.inner .thumb { margin-top: 9px; height: 46px; }
.bar.outer { width: 25px; padding: 11px 0 9px; }
.outer .thumb { margin-top: 9px; height: 529px; }

.foot { flex: none; height: 45px; background: #232f3e; color: #fff; display: flex; align-items: center; padding-left: 24px; font-size: 17.500px; font-weight: 500; border-top: 1px solid #414b57; }
.foot span { padding-bottom: 1px; letter-spacing: .03px; }
.foot .cs { margin-left: 8px; width: 40px; }
.foot .legal { width: 1417px; text-align: right; letter-spacing: .08px; }
.f1 { margin-left: 45px; width: 96px; }
.f2 { width: 87px; }
.foot .f3 { letter-spacing: -.1px; }

.taskbar { flex: none; height: 60px; display: flex; background: linear-gradient(90deg, #273d3f 0, #1f363b 27%, #1c2d3d 50%, #1a2844 65%, #1b2546 85%, #1c203f 100%); color: #fff; }
.start { width: 72px; display: flex; align-items: center; justify-content: center; }
.search { width: 432px; background: #fff; border: 3px solid #3f9bff; display: flex; align-items: center; padding-left: 15px; color: #000; font-size: 21px; }
.search span { padding-top: 3px; }
.typed { margin-left: 18px; letter-spacing: 0; }
.caret { width: 1.500px; height: 30px; background: #000; }
.hint { color: #9a9a9a; letter-spacing: -.3px; margin-left: -1px; }
.tview { margin: 18px 0 0 24px; }
.pinned { display: flex; gap: 14px; margin-left: 33px; }
.slot { width: 61px; display: flex; align-items: center; justify-content: center; border-bottom: 3px solid transparent; padding-top: 3px; }
.slot.open { border-color: #76b9ff; }
.tray { margin-left: auto; display: flex; align-items: center; fill: none; }
.tray svg { stroke: none; }
.tray .chev, .tray .cam, .tray .bat, .tray .vol { stroke: #fff; stroke-width: 1.300px; }
.temp, .sky { font-size: 20px; padding-top: 3px; }
.temp { margin-left: 12px; width: 57px; }
.sky { width: 102px; letter-spacing: .1px; }
.cam { margin-left: 20px; }
.bat { margin-left: 15px; }
.vol { margin-left: 13px; }
.clock { width: 112px; text-align: center; font-size: 17.500px; line-height: 28px; letter-spacing: -.1px; display: flex; flex-direction: column; }
.note { margin-left: 15px; }
.desk { width: 2px; height: 60px; background: #68708a; margin: 0 6px 0 30px; }

.float-nib { position: absolute; left: 1834px; top: 222px; }
.float-smile { position: absolute; left: 1833px; top: 283px; width: 51px; height: 51px; border: 3px solid #fff; background: #33c3ef; box-shadow: 0 3px 14px rgba(0, 0, 0, .35); display: flex; justify-content: center; padding-top: 21px; }

/* flyout */
.flyout { position: absolute; left: 72px; top: 59px; width: 1177px; height: 961px; border: 1px solid #8b8b8b; border-width: 1px 1px 0 0; display: flex; flex-direction: column; color: #fff; box-shadow: 0 0 14px rgba(0, 0, 0, .4); clip-path: inset(-14px -20px 0 -20px); background: #444; }
.scopes { flex: none; height: 77px; background: linear-gradient(#434343, #484a48 50%, #414345); display: flex; align-items: center; font-size: 19px; color: #dcdcdc; padding-bottom: 1px; border-bottom: 1px solid #3a3b3c; }
.scopes span { letter-spacing: -.2px; }
.s1 { align-self: stretch; width: 59px; margin-left: 20px; text-align: center; line-height: 76px; color: #fff; font-weight: 600; box-shadow: inset 0 -6px #3f9bff; }
.s2 { margin-left: 21px; width: 83px; }
.s3 { width: 139px; }
.s4 { width: 79px; }
.s5 { width: 47px; }
.ell { display: flex; gap: 6px; margin-left: auto; margin-right: 43px; }
.ell i { width: 3px; height: 3px; border-radius: 50%; background: #e0e0e0; }
.sx { margin-right: 38px; }
.cols { flex: 1; display: flex; min-height: 0; }
.results { width: 516px; background: linear-gradient(#3c3d3e 0, #353637 50px, #474848 150px, #494a4a 440px, #474848 750px, #3c3e3f 810px, #26292c 100%); }
h3 { height: 48px; line-height: 50px; padding-left: 18px; font-size: 18px; font-weight: 600; letter-spacing: .05px; }
h3.first { height: 49px; line-height: 52px; }
h3.web { height: 49px; }
h3.count { letter-spacing: .55px; }
.best { height: 96px; background: linear-gradient(#3973ac, #407ab5); display: flex; color: #3c76b0; padding: 24px 0 0 21px; }
.best div { margin-left: 19px; margin-top: -11px; color: #fff; }
.best .n { font-size: 21.500px; line-height: 35px; letter-spacing: -.1px; }
.best .k { font-size: 18.500px; line-height: 37px; letter-spacing: -.1px; }
.best b, .app b { font-weight: 600; }
.hit { height: 54px; display: flex; align-items: center; padding: 0 32px 0 18px; font-size: 21.500px; letter-spacing: 0; }
.hit span { margin-left: 18px; padding-top: 1px; flex: 1; }
.hit.q { letter-spacing: -.35px; }
.hit.q span { padding-top: 3px; }
.hit.noted span { padding: 0 0 2px; }
.hit b { font-weight: 600; }
.hit.q svg:first-child { margin-top: -2px; }
.hit small { font-size: 19px; color: #cfcfcf; letter-spacing: -.15px; }
.go { fill: none; stroke: #dcdcdc; stroke-width: 2.800px; }
.preview { flex: 1; padding: 19px 18px 0; background: linear-gradient(#313334, #3d3f3f 25%, #3a3b3b 70%, #18191b 100%); display: flex; }
.card { flex: 1; background: linear-gradient(#1f2020 0, #1f2021 60px, #272828 150px, #27292a 350px, #292a2a 600px, #151718 100%); display: flex; flex-direction: column; }
.hero { height: 267px; border-bottom: 3px solid #a6a6a6; margin-bottom: 17px; display: flex; flex-direction: column; align-items: center; padding-top: 43px; color: #202223; }
.hero svg { margin-left: 4px; }
.hero .n { color: #fff; font-size: 26px; line-height: 36px; margin-top: 33px; letter-spacing: -.2px; }
.hero .k { color: #c8c8c8; font-size: 18.500px; line-height: 30px; margin-top: 6px; }
.act { height: 48px; display: flex; align-items: center; padding-left: 36px; font-size: 18.500px; letter-spacing: -.06px; color: #f4f4f4; }
.act svg { color: #6cb2ff; margin-top: -5px; }
.act span { margin-left: 18px; padding-top: 2px; }
</style>
